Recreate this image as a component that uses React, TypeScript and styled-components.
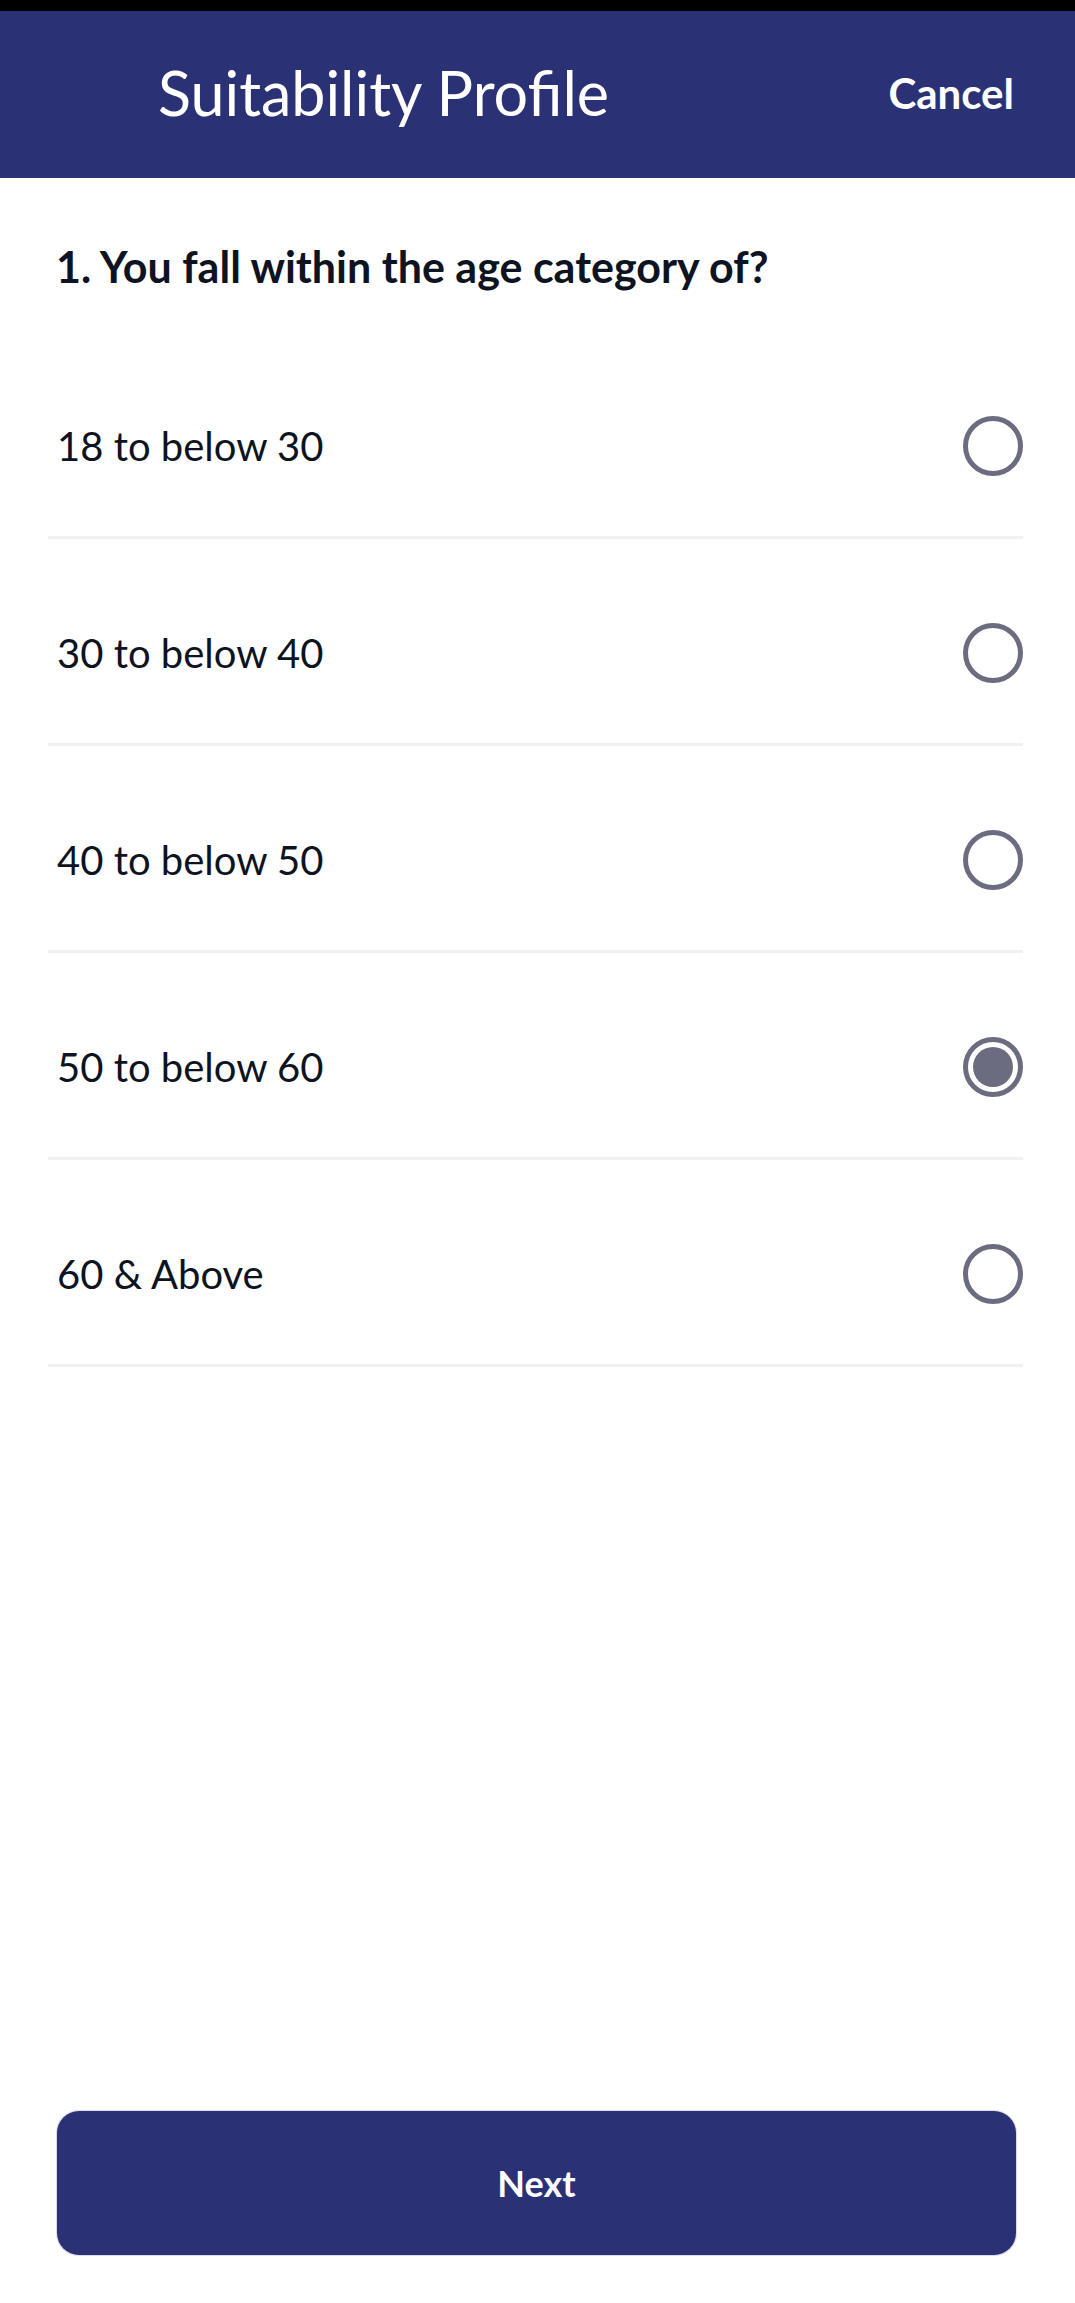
import React, { useState } from 'react'
import styled, { createGlobalStyle } from 'styled-components'

const GlobalStyle = createGlobalStyle`
    html, body{
        margin: 0;
        padding: 0;
        background: #ffffff;
    }
    body{
        font-family: Lato, "Noto Sans", sans-serif;
    }
`

const StyledPage = styled.main`
    display: flex;
    flex-direction: column;
    min-height: 100vh;
    .status-bar{
        background: #000000;
        height: 11px;
    }
`

const StyledHeader = styled.header`
    align-items: center;
    background: #2a3275;
    color: #ffffff;
    display: flex;
    height: 167px;
    justify-content: space-between;
    padding: 0 61px 0 158px;
    h1{
        font-size: 61px;
        font-weight: 400;
        margin: -4px 0 0;
    }
    button{
        background: none;
        border: none;
        color: #ffffff;
        font-family: inherit;
        font-size: 42px;
        font-weight: 700;
        margin-top: -4px;
        padding: 0;
    }
`

const StyledQuestion = styled.h2`
    color: #0d1321;
    font-size: 43px;
    font-weight: 700;
    line-height: 52px;
    margin: 63px 0 39px;
    padding-left: 56px;
`

const StyledList = styled.ul`
    list-style: none;
    margin: 0;
    padding: 0 52px 0 48px;
`

const StyledRow = styled.li`
    align-items: center;
    border-bottom: 3px solid #f0f0f3;
    box-sizing: border-box;
    color: #0d1321;
    cursor: pointer;
    display: flex;
    font-size: 40px;
    height: 207px;
    justify-content: space-between;
    padding: 24px 0 0 9px;
`

const StyledRadio = styled.span<{ $checked: boolean }>`
    align-items: center;
    border: 5px solid #6b6c80;
    border-radius: 50%;
    box-sizing: border-box;
    display: flex;
    flex-shrink: 0;
    height: 60px;
    justify-content: center;
    width: 60px;
    &::after{
        background: #6b6c80;
        border-radius: 50%;
        content: '';
        display: ${({ $checked }) => ($checked ? 'block' : 'none')};
        height: 40px;
        width: 40px;
    }
`

const StyledFooter = styled.footer`
    margin-top: auto;
    padding: 0 59px 48px 57px;
    button{
        background: #2a3275;
        border: none;
        border-radius: 22px;
        box-shadow: 0 0 0 1px #dadce8;
        color: #ffffff;
        font-family: inherit;
        font-size: 36px;
        font-weight: 700;
        height: 144px;
        width: 100%;
    }
`

const options = [
    '18 to below 30',
    '30 to below 40',
    '40 to below 50',
    '50 to below 60',
    '60 & Above',
]

export default function App() {
    const [selected, setSelected] = useState(3)

    return (
        <StyledPage>
            <GlobalStyle />
            <div className='status-bar' />
            <StyledHeader>
                <h1>Suitability Profile</h1>
                <button>Cancel</button>
            </StyledHeader>
            <StyledQuestion>1. You fall within the age category of?</StyledQuestion>
            <StyledList>
                {options.map((option, index) => (
                    <StyledRow key={option} onClick={() => setSelected(index)}>
                        {option}
                        <StyledRadio $checked={selected === index} />
                    </StyledRow>
                ))}
            </StyledList>
            <StyledFooter>
                <button>Next</button>
            </StyledFooter>
        </StyledPage>
    )
}
